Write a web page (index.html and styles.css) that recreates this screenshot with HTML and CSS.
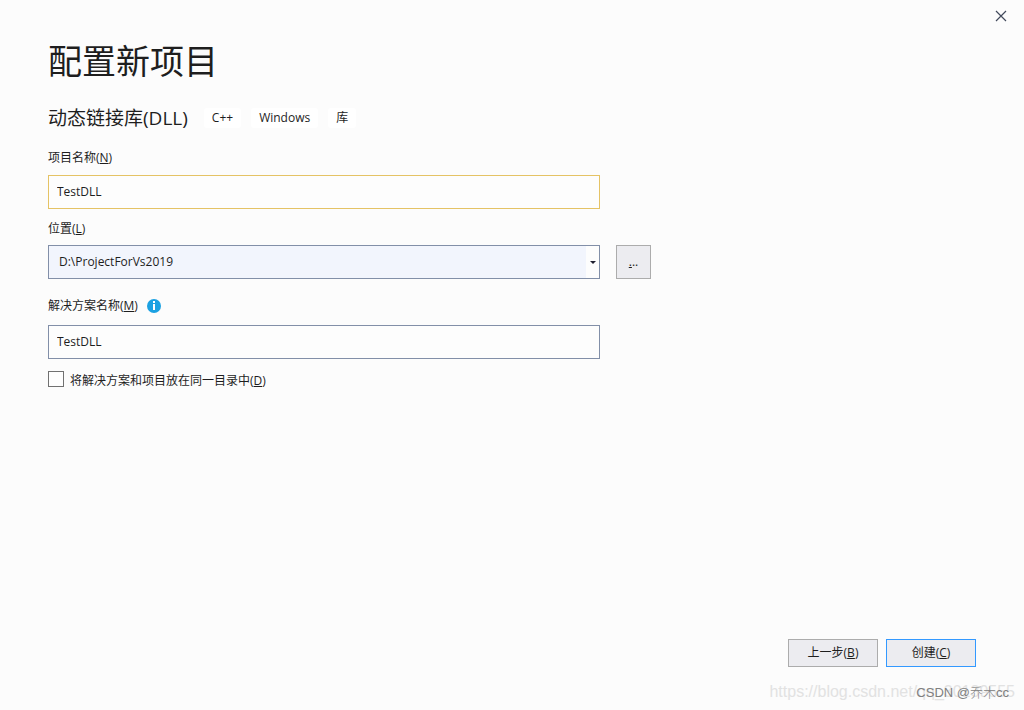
FILE: index.html
```html
<!DOCTYPE html>
<html lang="zh-CN">
<head>
<meta charset="utf-8">
<meta name="viewport" content="width=device-width, initial-scale=1">
<title>配置新项目</title>
<link rel="stylesheet" href="styles.css">
</head>
<body>
<div class="window">
  <header class="titlebar">
    <button class="close" type="button" aria-label="关闭">
      <svg width="12" height="12" viewBox="0 0 12 12" aria-hidden="true"><path d="M1 1l10 10M11 1L1 11" fill="none" stroke="#424a5c" stroke-width="1.2"/></svg>
    </button>
  </header>
  <form class="content">
    <h1 class="title">配置新项目</h1>
    <div class="template">
      <h2 class="template-name">动态链接库(DLL)</h2>
      <ul class="tags">
        <li class="tag">C++</li>
        <li class="tag">Windows</li>
        <li class="tag">库</li>
      </ul>
    </div>

    <label class="label" for="name">项目名称(<u>N</u>)</label>
    <input class="field field-focus" id="name" type="text" value="TestDLL">

    <label class="label label-location" for="location">位置(<u>L</u>)</label>
    <div class="location">
      <div class="combo">
        <select class="field combo-select" id="location"><option>D:\ProjectForVs2019</option></select>
        <svg class="combo-arrow" width="6" height="3" viewBox="0 0 6 3" aria-hidden="true"><path d="M0 0h6L3 3z" fill="#1e1e2e"/></svg>
      </div>
      <button class="button browse" type="button" aria-label="浏览"><span><u>.</u>..</span></button>
    </div>

    <div class="label-row">
      <label class="label-text" for="solution">解决方案名称(<u>M</u>)</label>
      <svg width="14" height="14" viewBox="0 0 14 14" aria-hidden="true"><circle cx="7" cy="7" r="7" fill="#1ba1e2"/><path d="M6 2h2v2H6zM6 5h2v6H6z" fill="#fff"/></svg>
    </div>
    <input class="field" id="solution" type="text" value="TestDLL">

    <div class="check">
      <input class="checkbox" id="same" type="checkbox">
      <label class="label-text" for="same">将解决方案和项目放在同一目录中(<u>D</u>)</label>
    </div>

    <footer class="actions">
      <button class="button" type="button">上一步(<u>B</u>)</button>
      <button class="button primary" type="button">创建(<u>C</u>)</button>
    </footer>
  </form>
  <div class="watermark-url">https://blog.csdn.net/qq_30139555</div>
  <div class="watermark-author">CSDN @乔木cc</div>
</div>
</body>
</html>
```

FILE: styles.css
```css
* {
  box-sizing: border-box;
}

body {
  margin: 0;
  background: #fcfcfc;
  color: #1e1e1e;
  font: 12px/16px "Open Sans", "Noto Sans CJK SC", sans-serif;
}

button,
input,
select {
  color: inherit;
  font: inherit;
}

u {
  text-underline-offset: 1px;
}

.window {
  position: relative;
  display: flex;
  flex-direction: column;
  min-height: 100vh;
}

.titlebar {
  display: flex;
  justify-content: flex-end;
  height: 32px;
}

.close {
  display: flex;
  align-items: center;
  justify-content: center;
  width: 46px;
  padding: 0;
  border: 0;
  background: none;
}

.content {
  display: flex;
  flex: 1;
  flex-direction: column;
  padding: 5px 48px 43px;
}

.title {
  margin: 0;
  font-size: 34px;
  font-weight: 400;
  line-height: 48px;
}

.template {
  display: flex;
  align-items: center;
  gap: 16px;
  margin-top: 19px;
}

.template-name {
  margin: 0;
  font-size: 19px;
  font-weight: 400;
  line-height: 28px;
}

.tags {
  display: flex;
  gap: 10px;
  margin: 0;
  padding: 0;
  list-style: none;
}

.tag {
  padding: 2px 8px;
  border-radius: 3px;
  background: #fff;
}

.label {
  margin: 18px 0 9px;
}

.label-location {
  margin: 12px 0 8px;
}

.field {
  width: 100%;
  max-width: 552px;
  height: 34px;
  padding: 0 8px 1px;
  border: 1px solid #828fa8;
  border-radius: 0;
  outline: 0;
  background: #fdfdfd;
}

.field-focus {
  border-color: #e5c365;
}

.location {
  display: flex;
  gap: 16px;
}

.combo {
  position: relative;
  flex: 0 1 552px;
}

.combo-select {
  display: block;
  padding: 0 20px 0 10px;
  appearance: none;
  background: linear-gradient(to left, #fdfdfd 13px, #f2f5fd 13px);
}

.combo-arrow {
  position: absolute;
  top: 16px;
  right: 4px;
  pointer-events: none;
}

.button {
  width: 90px;
  height: 28px;
  padding: 0;
  border: 1px solid #acacac;
  border-radius: 0;
  background: #ececf0;
}

.browse {
  width: 35px;
  height: 34px;
}

.primary {
  border-color: #3399ff;
}

.label-row {
  display: flex;
  align-items: center;
  gap: 9px;
  margin: 19px 0 11px;
}

.check {
  display: flex;
  align-items: flex-start;
  gap: 6px;
  margin-top: 12px;
}

.check .label-text {
  padding-top: 2px;
}

.checkbox {
  width: 16px;
  height: 16px;
  margin: 0;
  border: 1px solid #717171;
  appearance: none;
  background: #fefefe;
}

.actions {
  display: flex;
  justify-content: flex-end;
  gap: 8px;
  margin-top: auto;
}

.watermark-url,
.watermark-author {
  position: absolute;
  white-space: nowrap;
  pointer-events: none;
}

.watermark-url {
  right: 9px;
  bottom: 8px;
  color: #e2e2e2;
  font: 16px/20px "Liberation Sans", sans-serif;
}

.watermark-author {
  right: 15px;
  bottom: 7px;
  color: #808080;
  font: 300 13px/20px "Liberation Sans", "Noto Sans CJK SC", sans-serif;
}
```
